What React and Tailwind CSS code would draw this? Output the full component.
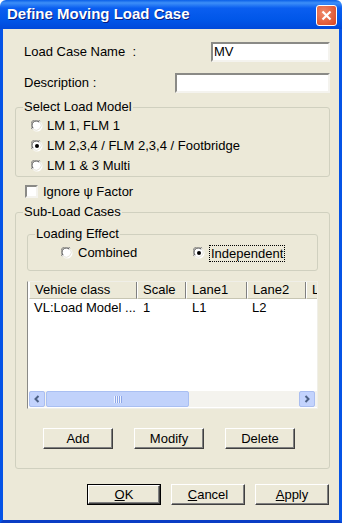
const raised =
  "border border-t-white border-l-white border-r-[#404040] border-b-[#404040] shadow-[inset_-1px_-1px_0_#808080]";

const Btn = ({ children, w = "w-[70px]", def }) => (
  <div className={def ? "border border-black" : ""}>
    <button
      className={`${w} ${def ? "h-[19px]" : "h-[21px]"} ${raised} bg-[#ece9d8] text-[13px] leading-none text-black flex items-center justify-center`}
    >
      {children}
    </button>
  </div>
);

const Radio = ({ checked }) => (
  <svg width="12" height="12" viewBox="0 0 12 12" className="shrink-0">
    <circle cx="6" cy="6" r="5.5" fill="#ffffff" />
    <path d="M1.2 9.2 A5.3 5.3 0 0 1 9.2 1.2" fill="none" stroke="#808080" strokeWidth="1" />
    <path d="M2.2 8.2 A4.2 4.2 0 0 1 8.2 2.2" fill="none" stroke="#404040" strokeWidth="1" />
    <path d="M9.6 2.4 A5.3 5.3 0 0 1 2.4 9.6" fill="none" stroke="#e4e2d6" strokeWidth="1" />
    {checked && <circle cx="6" cy="6" r="2" fill="#000000" />}
  </svg>
);

const Input = ({ value, w }) => (
  <div
    className={`${w} h-[20px] bg-white border-2 border-t-[#8a8a86] border-l-[#8a8a86] border-b-[#f4f3ee] border-r-[#f4f3ee] px-[1px] flex items-center text-[13px]`}
  >
    {value}
  </div>
);

const Group = ({ label, className, children }) => (
  <fieldset className={`border border-[#d0d0bf] rounded-[3px] ${className}`}>
    <legend className="ml-[7px] px-[1px] leading-[14px] text-[13px]">{label}</legend>
    {children}
  </fieldset>
);

const Arrow = ({ dir }) => (
  <div className="w-[16px] h-[16px] rounded-[2px] bg-[#c3d3fd] border border-[#aabef0] flex items-center justify-center">
    <svg width="8" height="8" viewBox="0 0 8 8">
      <path
        d={dir === "l" ? "M5.5 1 L2.5 4 L5.5 7" : "M2.5 1 L5.5 4 L2.5 7"}
        fill="none"
        stroke="#4d6185"
        strokeWidth="2"
      />
    </svg>
  </div>
);

const cols = [
  ["Vehicle class", "w-[108px]"],
  ["Scale", "w-[49px]"],
  ["Lane1", "w-[61px]"],
  ["Lane2", "w-[59px]"],
  ["L", "w-[40px]"],
];

export default function App() {
  return (
    <div
      className="w-[342px] h-[523px] flex flex-col text-black text-[13px]"
      style={{ fontFamily: '"Liberation Sans", Arial, sans-serif' }}
    >
      {/* title bar */}
      <div className="h-[29px] shrink-0 rounded-t-[6px] bg-[linear-gradient(to_bottom,#0a5fe8_0%,#3d8ff8_10%,#0a5ef0_28%,#0056e8_70%,#0049da_100%)] flex items-center justify-between pl-[7px] pr-[5px]">
        <span className="text-white font-bold text-[15px] [text-shadow:1px_1px_0_#0a1e80]">
          Define Moving Load Case
        </span>
        <div className="w-[21px] h-[21px] rounded-[3px] border border-white bg-[radial-gradient(circle_at_35%_35%,#f08a6a,#d9441f)] flex items-center justify-center mt-[1px]">
          <svg width="11" height="11" viewBox="0 0 11 11">
            <path d="M1.5 1.5 L9.5 9.5 M9.5 1.5 L1.5 9.5" stroke="#ffffff" strokeWidth="2.2" />
          </svg>
        </div>
      </div>

      {/* body */}
      <div className="flex-1 flex flex-col bg-[#ece9d8] border-x-[3px] border-b-[3px] border-x-[#0553e6] border-b-[#0a3dc4] pl-[12px] pr-[9px]">
        <div className="mt-[13px] flex items-center justify-between pl-[9px]">
          <span className="whitespace-pre">Load Case Name  :</span>
          <Input value="MV" w="w-[119px]" />
        </div>
        <div className="mt-[11px] flex items-center justify-between pl-[9px]">
          <span>Description :</span>
          <Input value="" w="w-[155px]" />
        </div>

        <Group label="Select Load Model" className="mt-[7px] w-[315px] pt-[2px]">
          {["LM 1, FLM 1", "LM 2,3,4 / FLM 2,3,4 / Footbridge", "LM 1 & 3 Multi"].map((t, i) => (
            <div key={t} className="h-[20px] flex items-center gap-[4px] pl-[15px]">
              <Radio checked={i === 1} />
              <span>{t}</span>
            </div>
          ))}
        </Group>

        <div className="mt-[8px] h-[13px] flex items-center gap-[5px] pl-[10px]">
          <div className="w-[13px] h-[13px] bg-white border-2 border-t-[#8a8a86] border-l-[#8a8a86] border-b-[#f4f3ee] border-r-[#f4f3ee]" />
          <span>Ignore ψ Factor</span>
        </div>

        <Group label="Sub-Load Cases" className="mt-[7px] w-[315px] pt-[8px] pb-[19px]">
          <Group label="Loading Effect" className="ml-[11px] w-[291px] pt-[3px] pb-[8px]">
            <div className="h-[18px] flex items-center pl-[33px]">
              <div className="w-[132px] flex items-center gap-[5px]">
                <Radio />
                <span>Combined</span>
              </div>
              <div className="flex items-center gap-[4px]">
                <Radio checked />
                <span className="border border-dotted border-black px-[1px] leading-[15px]">
                  Independent
                </span>
              </div>
            </div>
          </Group>

          <div className="ml-[11px] mt-[10px] w-[291px] h-[128px] bg-white border border-t-[#f0efe8] border-l-[#8a8a86] border-r-[#f0efe8] border-b-[#f0efe8] flex flex-col overflow-hidden">
            <div className="flex h-[17px] ml-[1px] shrink-0">
              {cols.map(([t, w]) => (
                <div
                  key={t}
                  className={`${w} shrink-0 bg-[#ece9d8] border-r border-b border-r-[#808080] border-b-[#c7c5b2] border-l border-l-white pl-[5px] flex items-center`}
                >
                  {t}
                </div>
              ))}
            </div>
            <div className="flex h-[17px] items-center ml-[1px]">
              <div className="w-[108px] pl-[5px]">VL:Load Model ...</div>
              <div className="w-[49px] pl-[6px]">1</div>
              <div className="w-[61px] pl-[6px]">L1</div>
              <div className="w-[59px] pl-[5px]">L2</div>
            </div>
            <div className="flex-1" />
            <div className="h-[16px] mb-[1px] ml-[1px] flex bg-[#f4f3ee] items-center">
              <Arrow dir="l" />
              <div className="ml-[1px] w-[143px] h-[16px] rounded-[2px] bg-[#c1d2fb] border border-[#a9bff2] flex items-center justify-center gap-[1px]">
                {[0, 1, 2, 3].map((k) => (
                  <div key={k} className="w-[1px] h-[7px] bg-[#eef3ff] shadow-[1px_0_0_#8ca6e8]" />
                ))}
              </div>
              <div className="flex-1" />
              <Arrow dir="r" />
              <div className="w-[2px]" />
            </div>
          </div>

          <div className="mt-[19px] flex gap-[21px] pl-[27px]">
            <Btn>Add</Btn>
            <Btn>Modify</Btn>
            <Btn>Delete</Btn>
          </div>
        </Group>

        <div className="mt-[15px] flex justify-end gap-[10px] pr-[1px]">
          <Btn w="w-[72px]" def>
            <span className="underline">O</span>K
          </Btn>
          <Btn w="w-[74px]">
            <span className="underline">C</span>ancel
          </Btn>
          <Btn w="w-[74px]">
            <span className="underline">A</span>pply
          </Btn>
        </div>
      </div>
    </div>
  );
}
